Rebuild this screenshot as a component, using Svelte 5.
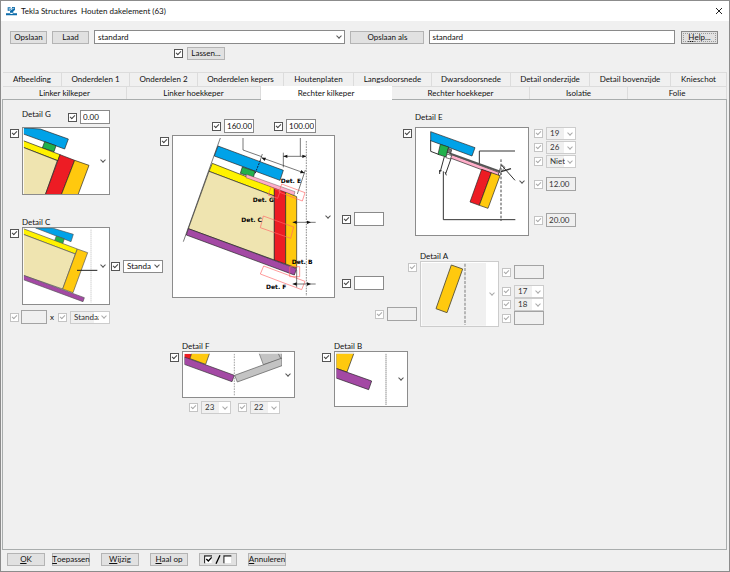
<script lang="ts">
	type Tab = { label: string; active?: boolean };

	const upperTabs: Tab[] = [
		{ label: 'Afbeelding' },
		{ label: 'Onderdelen 1' },
		{ label: 'Onderdelen 2' },
		{ label: 'Onderdelen kepers' },
		{ label: 'Houtenplaten' },
		{ label: 'Langsdoorsnede' },
		{ label: 'Dwarsdoorsnede' },
		{ label: 'Detail onderzijde' },
		{ label: 'Detail bovenzijde' },
		{ label: 'Knieschot' }
	];

	const lowerTabs: Tab[] = [
		{ label: 'Linker kilkeper' },
		{ label: 'Linker hoekkeper' },
		{ label: 'Rechter kilkeper', active: true },
		{ label: 'Rechter hoekkeper' },
		{ label: 'Isolatie' },
		{ label: 'Folie' }
	];

	let profile = $state('standard');
	let saveAs = $state('standard');
</script>

{#snippet check(name: string, disabled = false)}
	<input class="check" type="checkbox" checked {disabled} aria-label={name} />
{/snippet}

{#snippet field(name: string, value = '', disabled = false)}
	<span class="pair">
		{@render check(`${name} aan/uit`, disabled)}
		<input class="text" type="text" {value} {disabled} aria-label={name} />
	</span>
{/snippet}

{#snippet combo(name: string, value: string, disabled = false, wide = false)}
	<span class="pair">
		{@render check(`${name} aan/uit`, disabled)}
		<span class="combo" class:wide class:disabled>
			<select {disabled} aria-label={name}>
				<option>{value}</option>
			</select>
		</span>
	</span>
{/snippet}

<div class="window">
	<header class="titlebar">
		<svg class="logo" viewBox="0 0 33 30" aria-hidden="true">
			<path d="M5 4h9v5l4-2V3h9v9l-5 4v4H12v-6H5z" fill="#0d6cab" />
			<path d="M8 9l6-2 4 3-6 3zM18 9l7-3" stroke="#fff" stroke-width="2" fill="none" />
			<path d="M0 22h12l2 2h5l2-2h12v6H0z" fill="#0d6cab" />
		</svg>
		<h1>Tekla Structures&nbsp; Houten dakelement (63)</h1>
		<button class="close" aria-label="Sluiten">
			<svg viewBox="0 0 8 8"><path d="M1 1l6 6M7 1l-6 6" stroke="#222" fill="none" /></svg>
		</button>
	</header>

	<div class="toolbar">
		<button class="btn">Opslaan</button>
		<button class="btn">Laad</button>
		<span class="combo profile">
			<select bind:value={profile} aria-label="Profiel">
				<option>standard</option>
			</select>
		</span>
		<button class="btn save-as">Opslaan als</button>
		<input class="text name" type="text" bind:value={saveAs} aria-label="Opslaan als naam" />
		<button class="btn help"><u>H</u>elp...</button>
	</div>
	<div class="welds">
		{@render check('Lassen')}
		<button class="btn">Lassen...</button>
	</div>

	<nav class="tabs upper">
		{#each upperTabs as tab}
			<button class="tab">{tab.label}</button>
		{/each}
	</nav>
	<nav class="tabs lower">
		{#each lowerTabs as tab}
			<button class="tab" class:active={tab.active}>{tab.label}</button>
		{/each}
	</nav>

	<main class="panel">
		<div class="columns">
			<div class="column">
				<section class="detail">
					<div class="head tall">
						<label for="detail-g">Detail G</label>
						{@render field('Maat G', '0.00')}
					</div>
					{@render check('Detail G')}
					<button id="detail-g" class="picker">
						<svg class="g" viewBox="67 69 258 198" aria-hidden="true">
							<g stroke="#222" stroke-width="2">
								<path d="M60 68L119 72 203 102 192 132 60 84z" fill="#00a2e8" />
								<path d="M132 110l34 12-6 18-35-11z" fill="#22b14c" />
								<path d="M60 104l118 45-6 18L60 124z" fill="#fff200" />
								<path d="M60 124l110 43-37 105H60z" fill="#efe4b0" />
								<path d="M178 149l44 17-41 106h-48z" fill="#ed1c24" />
								<path d="M222 166l43 15-34 91h-50z" fill="#ffc90e" />
							</g>
							<path d="M325 60v215M67 60v215" stroke="#fff" stroke-width="5" />
						</svg>
					</button>
				</section>

				<section class="detail detail-c">
					<div class="head"><label for="detail-c">Detail C</label></div>
					{@render check('Detail C')}
					<div class="beside">
						<button id="detail-c" class="picker">
							<svg class="c" viewBox="67 49 258 228" aria-hidden="true">
								<path d="M271 54v218" stroke="#999" stroke-width="2" stroke-dasharray="3 3" />
								<g stroke="#555" stroke-width="2">
									<path d="M105 49l50 0 63 19-7 22z" fill="#00a2e8" />
									<path d="M167 73l24 8-5 16-25-8z" fill="#22b14c" />
									<path d="M60 48l170 64-6 15L60 65z" fill="#fff200" />
									<path d="M60 65l164 62-38 105L60 188z" fill="#efe4b0" />
									<path d="M230 112l31 11-44 120-31-11z" fill="#ffc90e" />
									<path d="M60 188l191 70-4 12L60 201z" fill="#a349a4" />
								</g>
								<path d="M229 176h61" stroke="#222" stroke-width="3" />
								<path d="M67 40v240" stroke="#fff" stroke-width="5" />
							</svg>
						</button>
						{@render combo('Type C', 'Standaard', false, true)}
					</div>
					<div class="below sizes">
						<input class="check" type="checkbox" checked disabled aria-label="Aantal aan/uit" />
						<input class="text" type="text" disabled aria-label="Aantal" />
						<span>x</span>
						{@render combo('Type maat', 'Standaard', true, true)}
					</div>
				</section>
			</div>

			<div class="column middle">
				<div class="measures">
					{@render field('Afstand links', '160.00')}
					{@render field('Afstand rechts', '100.00')}
				</div>
				<section class="detail">
					{@render check('Overzicht')}
					<div class="beside">
						<button class="picker" aria-label="Overzicht">
							<svg class="overview" viewBox="24 78 483 483" aria-hidden="true">
								<path
									d="M166 84L55 395M234 84v36l56 20M290 143l128 46M406 84v55M355 139h69M355 128v44M292 132l-8 24M421 180l-24 72"
									stroke="#333"
									stroke-width="2"
									fill="none"
								/>
								<path d="M424 93v465" stroke="#555" stroke-width="2" stroke-dasharray="5 3" />
								<g stroke="#222" stroke-width="2">
									<path d="M159 108l196 73-10 30-197-73z" fill="#00a2e8" />
									<path d="M232 171l38 13-5 19-39-13z" fill="#22b14c" />
									<path d="M142 160l186 73v25L132 184z" fill="#fff200" />
									<path d="M132 184l196 74v192L70 356z" fill="#efe4b0" />
									<path d="M328 233l34 12v217l-34-12z" fill="#ed1c24" />
									<path d="M362 245l33 15v214l-33-12z" fill="#ffc90e" />
									<path d="M244 193l146 52-3 11-144-53z" fill="#ffaec9" stroke-width="1" />
									<path d="M70 356l325 120-7 19L64 375z" fill="#a349a4" />
								</g>
								<path d="M286 151l-16 40" stroke="#124" stroke-width="3" stroke-dasharray="6 3" />
								<path
									d="M350 222l70 26-8 25-70-27zM318 232l28 10-8 23-29-10zM295 318l91 33-9 34-91-32zM374 470h30v30h-30zM296 468l124 46-10 25-124-47z"
									stroke="#ff6868"
									stroke-width="2"
									fill="none"
								/>
								<path d="M383 337h69M383 522h69M395 480v52" stroke="#333" stroke-width="2" />
								<path
									d="M383 337l12-5v10zM438 337l-12-5v10zM383 522l12-5v10zM438 522l-12-5v10zM355 139l12-5v10zM424 139l-12-5v10zM290 143l13 0-4 10zM418 189l-9-9-4 10z"
									fill="#111"
								/>
								<g class="marks">
									<text x="347" y="219">Det. E</text>
									<text x="263" y="276">Det. G</text>
									<text x="229" y="337">Det. C</text>
									<text x="380" y="463">Det. B</text>
									<text x="303" y="537">Det. F</text>
								</g>
							</svg>
						</button>
						<div class="side-fields">
							{@render field('Maat boven')}
							{@render field('Maat onder')}
						</div>
					</div>
				</section>
			</div>

			<div class="column right">
				<section class="detail">
					<div class="head raised"><label for="detail-e">Detail E</label></div>
					{@render check('Detail E')}
					<div class="beside">
						<button id="detail-e" class="picker">
							<svg class="e" viewBox="63 60 336 321" aria-hidden="true">
								<path
									d="M107 96v34l26 10M253 172v-43h107M145 190v145h216M148 146l-12 44M152 197l16-45M134 186v12M132 190l8-2M150 192l4 10M320 172l40 45"
									stroke="#333"
									stroke-width="3"
									fill="none"
								/>
								<path d="M318 154v185" stroke="#444" stroke-width="3" stroke-dasharray="8 5" />
								<g stroke="#222" stroke-width="2">
									<path d="M107 71l133 48-9 25-124-46z" fill="#00a2e8" />
									<path d="M136 109l25 8-8 30-24-8z" fill="#22b14c" />
									<path d="M170 140l144 54-3 10-145-54z" fill="#ffaec9" />
									<path d="M260 184l29 10-36 98-28-10z" fill="#ed1c24" />
									<path d="M289 194l26 9-36 98-26-9z" fill="#ffc90e" />
								</g>
								<path d="M164 136l152 55" stroke="#555" stroke-width="6" />
								<path d="M160 121l10 4-3 12-11-4z" fill="#777" stroke="#222" stroke-width="2" />
								<path d="M156 138l14 5-4 10-13-4z" fill="#fff" stroke="#333" stroke-width="2" />
								<path d="M312 190l8-20 10 8-12 14" stroke="#333" stroke-width="2" fill="none" />
								<path d="M318 191l30-9" stroke="#333" stroke-width="4" />
								<circle cx="314" cy="198" r="4" fill="#fff" stroke="#222" stroke-width="2" />
							</svg>
						</button>
						<div class="stack">
							{@render combo('E1', '19', true)}
							{@render combo('E2', '26', true)}
							{@render combo('E3', 'Niet', true)}
							<div class="gap-small">{@render field('E4', '12.00', true)}</div>
							<div class="gap-large">{@render field('E5', '20.00', true)}</div>
						</div>
					</div>
				</section>

				<section class="detail detail-a">
					<div class="head"><label for="detail-a">Detail A</label></div>
					<div class="lead">
						{@render check('Detail A', true)}
						{@render field('A1', '', true)}
					</div>
					<div class="beside tight">
						<button id="detail-a" class="picker" disabled>
							<svg class="a" viewBox="153 51 231 192" aria-hidden="true">
								<path d="M155 54h193v188H155z" fill="#f0f0f0" />
								<path d="M285 56v184" stroke="#aaa" stroke-width="5" stroke-dasharray="9 4" />
								<path d="M244 60l34 12-47 131-33-12z" fill="#ffc90e" stroke="#665f40" stroke-width="3" />
							</svg>
						</button>
						<div class="stack">
							<div class="gap-top">{@render field('A2', '', true)}</div>
							{@render combo('A3', '17', true)}
							{@render combo('A4', '18', true)}
							{@render field('A5', '', true)}
						</div>
					</div>
				</section>
			</div>
		</div>

		<div class="bottom">
			<section class="detail">
				<div class="head"><label for="detail-f">Detail F</label></div>
				{@render check('Detail F')}
				<button id="detail-f" class="picker">
					<svg class="f" viewBox="66 51 333 135" aria-hidden="true">
						<g stroke="#333" stroke-width="2">
							<path d="M70 56h22l-5 17-17-5z" fill="#ed1c24" stroke="none" />
							<path d="M92 54h54l-12 34-47-17z" fill="#ffc90e" />
							<path d="M70 66l150 55-7 19L70 88z" fill="#a349a4" />
							<path d="M294 54h69v18l-56 17z" fill="#c3c3c3" stroke="#666" />
							<path d="M363 69L221 121l8 20 134-49z" fill="#c3c3c3" stroke="#555" />
							<path d="M351 54l8 16" stroke="#555" fill="none" />
						</g>
						<path d="M220 56v128" stroke="#777" stroke-width="2" stroke-dasharray="5 3" />
						<path d="M60 54h340M68 50v140M365 50v140" stroke="#fff" stroke-width="4" />
					</svg>
				</button>
				<div class="below pairs">
					{@render combo('F1', '23', true)}
					{@render combo('F2', '22', true)}
				</div>
			</section>

			<section class="detail">
				<div class="head"><label for="detail-b">Detail B</label></div>
				{@render check('Detail B')}
				<button id="detail-b" class="picker">
					<svg class="b" viewBox="525 51 216 162" aria-hidden="true">
						<g stroke="#222" stroke-width="2">
							<path d="M528 54h54l-21 57-33-11z" fill="#ffc90e" />
							<path d="M528 100l107 38-9 26-98-35z" fill="#a349a4" />
						</g>
						<path d="M678 56v155" stroke="#555" stroke-width="3" stroke-dasharray="3 3" />
						<path d="M525 54h210M527 50v140" stroke="#fff" stroke-width="4" />
					</svg>
				</button>
			</section>
		</div>
	</main>

	<footer>
		<div class="confirm">
			<button class="btn"><u>O</u>K</button>
			<button class="btn"><u>T</u>oepassen</button>
		</div>
		<button class="btn"><u>W</u>ijzig</button>
		<button class="btn"><u>H</u>aal op</button>
		<button class="btn" aria-label="Alles aan of uit">
			<svg class="toggle" viewBox="0 0 84 27" aria-hidden="true">
				<path d="M2 25V3h22M60 25V3h22" stroke="#333" stroke-width="4" fill="none" />
				<path d="M4 5h19v19H4zM62 5h19v19H62z" fill="#fff" />
				<path d="M7 12l6 6 10-11M48 1L36 26" stroke="#000" stroke-width="4" fill="none" />
			</svg>
		</button>
		<button class="btn"><u>A</u>nnuleren</button>
	</footer>
</div>

<style>
	:global(body) {
		margin: 0;
		background: #f0f0f0;
	}

	.window {
		box-sizing: border-box;
		min-height: 100vh;
		display: flex;
		flex-direction: column;
		border: 1px solid #8c8c8c;
		background: #f0f0f0;
		color: #111;
		font: 8px/9px Lato, 'Noto Sans', sans-serif;
	}

	button,
	input,
	select {
		box-sizing: border-box;
		margin: 0;
		font: inherit;
		color: inherit;
	}

	svg {
		display: block;
	}

	.titlebar {
		display: flex;
		align-items: center;
		gap: 4px;
		height: 20px;
		padding: 0 6px 0 5px;
		background: #fff;
	}

	.logo {
		width: 11px;
		height: 10px;
	}

	h1 {
		flex: 1;
		margin: 0;
		font: inherit;
	}

	.close {
		padding: 0;
		border: 0;
		background: none;
	}

	.close svg {
		width: 8px;
		height: 8px;
	}

	.toolbar {
		display: flex;
		align-items: center;
		gap: 5px;
		padding: 9px 11px 0 9px;
	}

	.btn {
		display: flex;
		align-items: center;
		justify-content: center;
		width: 38px;
		height: 13px;
		padding: 0;
		border: 1px solid #b4b4b4;
		background: #e1e1e1;
		white-space: nowrap;
	}

	.toolbar .btn {
		width: 37px;
	}

	.toolbar .save-as {
		width: 74px;
	}

	.help {
		margin-left: 1px;
		border-color: #888;
		outline: 1px dotted #999;
		outline-offset: -3px;
	}

	.text {
		width: 30px;
		height: 14px;
		padding: 0 1px 0 2px;
		border: 1px solid #8a8a8a;
		background: #fff;
	}

	.text:disabled {
		border-color: #a3a3a3;
		background: #f0f0f0;
		color: #333;
	}

	.name {
		flex: 244;
	}

	.profile {
		flex: 255;
	}

	.combo {
		position: relative;
		display: block;
		width: 30px;
		height: 13px;
	}

	.combo.wide {
		width: 40px;
	}

	.combo.profile {
		width: auto;
		height: 14px;
	}

	.combo select {
		display: block;
		width: 100%;
		height: 100%;
		padding: 0 11px 0 3px;
		border: 1px solid #8a8a8a;
		border-radius: 0;
		background: #fff;
		appearance: none;
		text-overflow: clip;
	}

	.combo.disabled select {
		padding-right: 10px;
		border-color: #ccc;
		background: linear-gradient(to right, #f0f0f0 60%, #fff 60%);
		color: #333;
		opacity: 1;
	}

	.combo::after,
	.picker::after {
		content: '';
		position: absolute;
		top: 50%;
		right: 4px;
		width: 3px;
		height: 3px;
		margin-top: -3px;
		border: solid #555;
		border-width: 0 1px 1px 0;
		transform: rotate(45deg);
		pointer-events: none;
	}

	.combo.disabled::after,
	.picker:disabled::after {
		border-color: #aaa;
	}

	.check {
		position: relative;
		flex: none;
		width: 9px;
		height: 9px;
		border: 1px solid #555;
		background: #fff;
		appearance: none;
	}

	.check:checked::after {
		content: '';
		position: absolute;
		top: 0;
		left: 2px;
		width: 2px;
		height: 4px;
		border: solid #444;
		border-width: 0 1px 1px 0;
		transform: rotate(45deg);
	}

	.check:disabled {
		border-color: #c4c4c4;
	}

	.check:disabled::after {
		border-color: #aaa;
	}

	.welds {
		display: flex;
		align-items: center;
		gap: 4px;
		padding: 3px 0 0 173px;
	}

	.tabs {
		display: grid;
		padding: 0 2px;
	}

	.upper {
		grid-template-columns: 59fr 68fr 68fr 86fr 70fr 78fr 79fr 79fr 81fr 56fr;
		margin-top: 12px;
	}

	.lower {
		grid-template-columns: 124fr 134fr 131fr 138fr 98fr 99fr;
	}

	.tab {
		min-width: 0;
		height: 14px;
		padding: 0;
		border: solid #dcdcdc;
		border-width: 1px 1px 0 0;
		background: #f0f0f0;
		white-space: nowrap;
	}

	.lower .tab {
		height: 13px;
	}

	.lower .tab.active {
		height: 14px;
		margin-bottom: -1px;
		border-color: #fff;
		background: #fff;
		z-index: 1;
	}

	.panel {
		flex: 1;
		margin: 0 2px 0 1px;
		padding: 10px 7px;
		border: 1px solid #a9adad;
	}

	.columns {
		display: grid;
		grid-template-columns: 150px 243px 1fr;
	}

	.detail {
		display: grid;
		grid-template-columns: auto auto;
		justify-content: start;
		align-items: start;
		column-gap: 3px;
	}

	.detail > .check {
		margin-top: 2px;
	}

	.head {
		grid-column: 2;
		display: flex;
		height: 9px;
	}

	.head.tall {
		height: 17px;
		align-items: flex-start;
		justify-content: space-between;
	}

	.head.raised {
		height: 14px;
	}

	.picker {
		position: relative;
		padding: 0;
		border: 1px solid #8c8c8c;
		background: #fff;
	}

	.picker:disabled {
		border-color: #ccc;
	}

	.pair {
		display: flex;
		align-items: center;
		gap: 3px;
	}

	.beside {
		display: flex;
		align-items: flex-start;
		gap: 5px;
	}

	.beside.tight {
		gap: 3px;
	}

	.below {
		grid-column: 1 / -1;
		display: flex;
		align-items: center;
	}

	.detail-c {
		margin-top: 23px;
	}

	.detail-c .beside {
		align-items: center;
		gap: 1px;
	}

	.sizes {
		gap: 2px;
		margin-top: 5px;
	}

	.sizes .text {
		width: 26px;
	}

	.sizes > span {
		padding: 0 1px;
	}

	.pairs {
		gap: 7px;
		margin-top: 3px;
		padding-left: 19px;
	}

	.middle {
		padding-top: 9px;
	}

	.measures {
		display: flex;
		gap: 20px;
		margin-bottom: 2px;
		padding-left: 52px;
	}

	.side-fields {
		display: flex;
		flex-direction: column;
		gap: 50px;
		padding: 77px 0 0 2px;
	}

	.right {
		padding-top: 3px;
	}

	.stack {
		display: flex;
		flex-direction: column;
		gap: 1px;
	}

	.tight .stack {
		gap: 0;
		padding-top: 4px;
	}

	.gap-small {
		margin-top: 8px;
	}

	.gap-large {
		margin-top: 21px;
	}

	.gap-top {
		margin-bottom: 6px;
	}

	.detail-a {
		margin: 16px 0 0 -28px;
	}

	.lead {
		display: flex;
		flex-direction: column;
		align-items: flex-end;
		gap: 35px;
		padding-top: 2px;
	}

	.bottom {
		display: flex;
		align-items: flex-start;
		gap: 27px;
		margin-top: 15px;
		padding-left: 160px;
	}

	.g {
		width: 86px;
		height: 66px;
	}

	.c {
		width: 86px;
		height: 76px;
	}

	.overview {
		width: 161px;
		height: 161px;
	}

	.e {
		width: 112px;
		height: 107px;
	}

	.a {
		width: 77px;
		height: 64px;
	}

	.f {
		width: 111px;
		height: 45px;
	}

	.b {
		width: 72px;
		height: 54px;
	}

	.marks {
		font: bold 18px 'DejaVu Sans', sans-serif;
	}

	footer {
		display: flex;
		gap: 11px;
		padding: 3px 6px 5px;
	}

	.confirm {
		display: flex;
		gap: 7px;
	}

	.toggle {
		width: 28px;
		height: 9px;
	}
</style>
